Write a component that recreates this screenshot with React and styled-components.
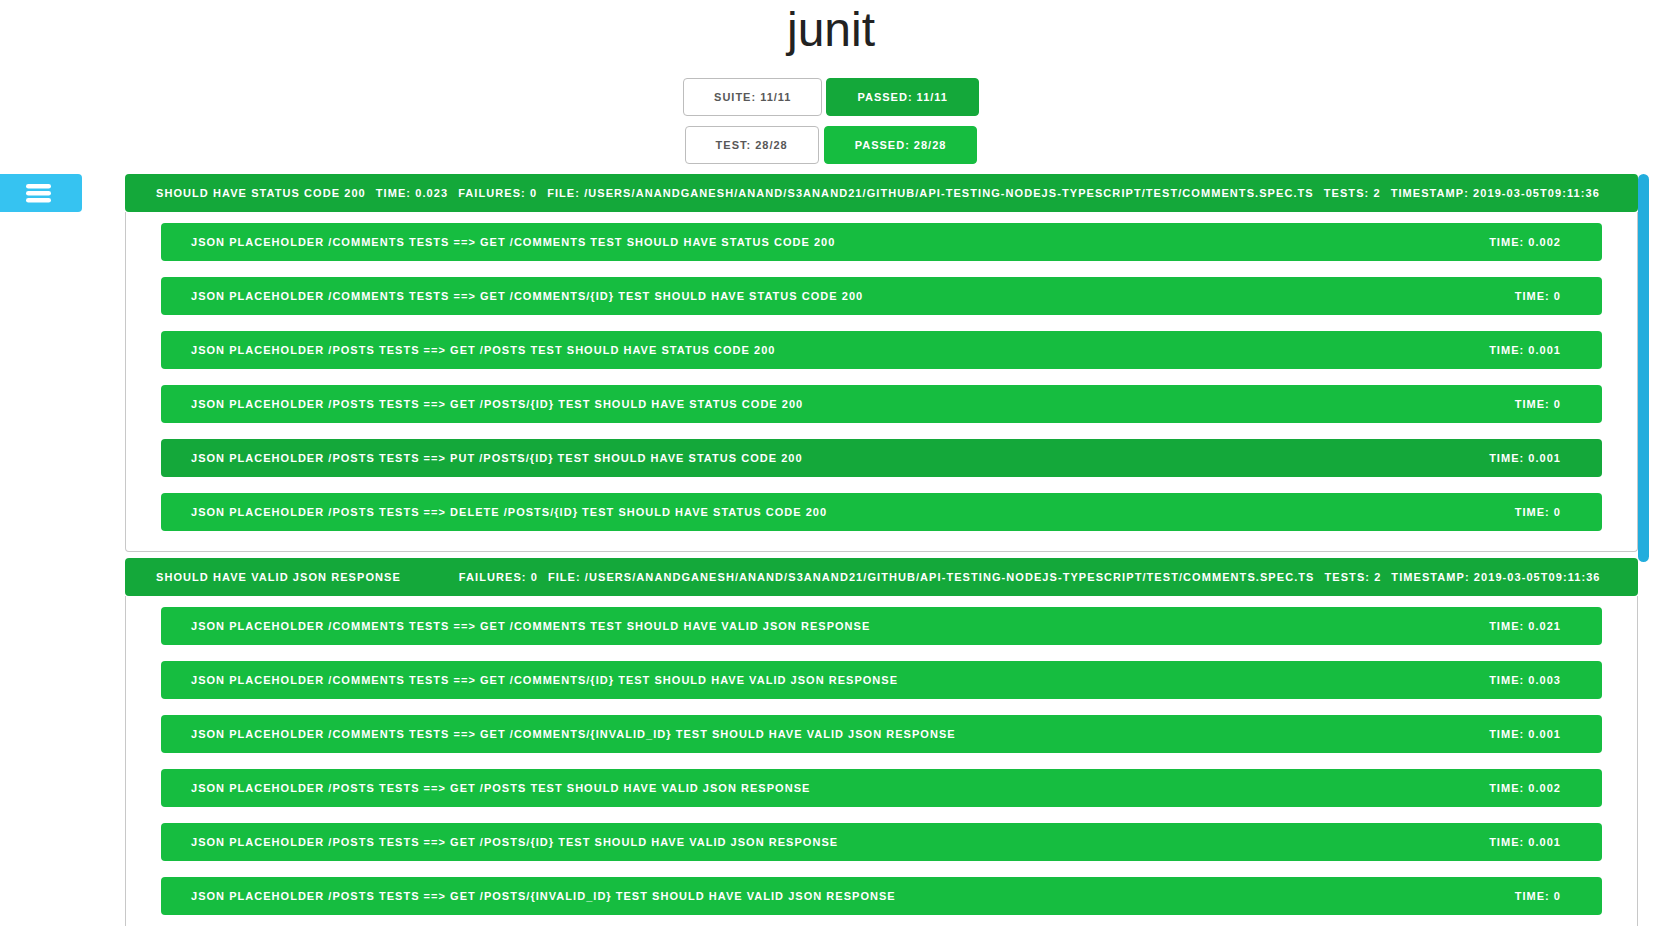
import React from "react";
import styled, { createGlobalStyle } from "styled-components";

const FILE =
  "/Users/anandganesh/anand/s3anand21/github/api-testing-nodejs-typescript/test/comments.spec.ts";
const POSTS_FILE =
  "/Users/anandganesh/anand/s3anand21/github/api-testing-nodejs-typescript/test/posts.spec.ts";
const STAMP = "2019-03-05T09:11:36";

const suites = [
  {
    name: "should have status code 200",
    time: "0.023",
    failures: 0,
    file: FILE,
    tests: 2,
    timestamp: STAMP,
    cases: [
      { name: "JSON Placeholder /comments tests ==> GET /comments test should have status code 200", time: "0.002" },
      { name: "JSON Placeholder /comments tests ==> GET /comments/{id} test should have status code 200", time: "0" },
      { name: "JSON Placeholder /posts tests ==> GET /posts test should have status code 200", time: "0.001" },
      { name: "JSON Placeholder /posts tests ==> GET /posts/{id} test should have status code 200", time: "0" },
      { name: "JSON Placeholder /posts tests ==> PUT /posts/{id} test should have status code 200", time: "0.001", active: true },
      { name: "JSON Placeholder /posts tests ==> DELETE /posts/{id} test should have status code 200", time: "0" },
    ],
  },
  {
    name: "should have valid json response",
    time: "",
    failures: 0,
    file: FILE,
    tests: 2,
    timestamp: STAMP,
    cases: [
      { name: "JSON Placeholder /comments tests ==> GET /comments test should have valid json response", time: "0.021" },
      { name: "JSON Placeholder /comments tests ==> GET /comments/{id} test should have valid json response", time: "0.003" },
      { name: "JSON Placeholder /comments tests ==> GET /comments/{invalid_id} test should have valid json response", time: "0.001" },
      { name: "JSON Placeholder /posts tests ==> GET /posts test should have valid json response", time: "0.002" },
      { name: "JSON Placeholder /posts tests ==> GET /posts/{id} test should have valid json response", time: "0.001" },
      { name: "JSON Placeholder /posts tests ==> GET /posts/{invalid_id} test should have valid json response", time: "0" },
    ],
  },
  // remaining suites, below the fold
  ...[2, 2, 2, 2, 2, 2, 2, 1, 1].map((count, k) => ({
    name: `posts suite ${k + 3}`,
    time: "0.004",
    failures: 0,
    file: POSTS_FILE,
    tests: count,
    timestamp: STAMP,
    cases: Array.from({ length: count }, (_, i) => ({
      name: `JSON Placeholder /posts tests ==> case ${i + 1}`,
      time: "0.001",
    })),
  })),
];

const VIEW = 926;
const contentHeight =
  suites.reduce((sum, s) => sum + 60 + 54 * s.cases.length, 0) + 38;
const thumbHeight = Math.round((VIEW * VIEW) / contentHeight);
const visibleSuites = suites.slice(0, 2);

const GlobalStyle = createGlobalStyle`
  html, body {
    margin: 0;
    overflow: hidden;
    background: #fff;
  }
  body {
    font-family: "Liberation Sans", Arial, sans-serif;
  }
`;

const Page = styled.div`
  padding-top: 2px;
`;

const Title = styled.h1`
  margin: 0 0 20px;
  font-size: 48px;
  line-height: 56px;
  font-weight: 400;
  color: #222;
  text-align: center;
`;

const Counters = styled.div`
  display: flex;
  flex-direction: column;
  align-items: center;
  gap: 10px;
`;

const CounterRow = styled.div`
  display: flex;
  gap: ${(p) => p.$gap}px;
`;

const Counter = styled.div`
  height: 38px;
  box-sizing: border-box;
  padding: 0 30px;
  display: flex;
  align-items: center;
  border-radius: 4px;
  border: 1px solid ${(p) => (p.$passed ? p.$bg : "#bdbdbd")};
  background: ${(p) => (p.$passed ? p.$bg : "#fff")};
  color: ${(p) => (p.$passed ? "#fff" : "#585858")};
  font-size: 11px;
  font-weight: 700;
  letter-spacing: 1px;
  white-space: nowrap;
`;

const Main = styled.div`
  display: flex;
  margin-top: 10px;
`;

const Sidebar = styled.div`
  width: 125px;
  flex-shrink: 0;
`;

const MenuButton = styled.button`
  width: 82px;
  height: 38px;
  padding: 0 5px 0 0;
  border: none;
  border-radius: 0 4px 4px 0;
  background: #36c3f1;
  display: flex;
  align-items: center;
  justify-content: center;
  cursor: pointer;
`;

const Report = styled.div`
  flex: 1;
  min-width: 0;
  height: calc(100vh - 174px);
  overflow: hidden;
  display: flex;
  flex-direction: column;
  gap: 6px;
`;

const ScrollTrack = styled.div`
  width: 11px;
  flex-shrink: 0;
  margin-right: 13px;
`;

const ScrollThumb = styled.div`
  width: 11px;
  background: #22addd;
  border-radius: 6px;
`;

const Suite = styled.section`
  flex-shrink: 0;
`;

const SuiteHeader = styled.div`
  height: 38px;
  box-sizing: border-box;
  padding: 0 31px;
  display: flex;
  align-items: center;
  gap: 10px;
  background: #14a83a;
  border-radius: 4px;
  color: #fff;
  font-size: 11px;
  font-weight: 700;
  letter-spacing: 1.07px;
  text-transform: uppercase;
  white-space: nowrap;
  overflow: hidden;
`;

const Meta = styled.span`
  flex-shrink: 0;
`;

const EmptyMeta = styled.span`
  width: 38px;
  flex-shrink: 0;
`;

const SuiteBody = styled.div`
  border: 1px solid #c8c8c8;
  border-top: none;
  border-radius: 0 0 4px 4px;
  padding: 11px 35px 20px;
  display: flex;
  flex-direction: column;
  gap: 16px;
`;

const TestRow = styled.div`
  height: 38px;
  box-sizing: border-box;
  padding: 0 41px 0 30px;
  display: flex;
  align-items: center;
  justify-content: space-between;
  background: ${(p) => (p.$active ? "#14a83a" : "#16bd40")};
  border-radius: 4px;
  color: #fff;
  font-size: 11px;
  font-weight: 700;
  letter-spacing: 1.03px;
  text-transform: uppercase;
  white-space: nowrap;
`;

const BarsIcon = () => (
  <svg width="25" height="19" viewBox="0 0 25 19" fill="#fff">
    <rect x="0" y="0" width="25" height="4.6" rx="2.3" />
    <rect x="0" y="7" width="25" height="4.6" rx="2.3" />
    <rect x="0" y="14" width="25" height="4.6" rx="2.3" />
  </svg>
);

export default function App() {
  return (
    <Page>
      <GlobalStyle />
      <Title>junit</Title>
      <Counters>
        <CounterRow $gap={4}>
          <Counter>SUITE: 11/11</Counter>
          <Counter $passed $bg="#14a83a">PASSED: 11/11</Counter>
        </CounterRow>
        <CounterRow $gap={5}>
          <Counter>TEST: 28/28</Counter>
          <Counter $passed $bg="#16bd40">PASSED: 28/28</Counter>
        </CounterRow>
      </Counters>
      <Main>
        <Sidebar>
          <MenuButton aria-label="menu">
            <BarsIcon />
          </MenuButton>
        </Sidebar>
        <Report>
          {visibleSuites.map((s, i) => (
            <Suite key={i}>
              <SuiteHeader>
                <Meta>{s.name}</Meta>
                {s.time ? <Meta>time: {s.time}</Meta> : <EmptyMeta />}
                <Meta>failures: {s.failures}</Meta>
                <Meta>file: {s.file}</Meta>
                <Meta>tests: {s.tests}</Meta>
                <Meta>timestamp: {s.timestamp}</Meta>
              </SuiteHeader>
              <SuiteBody>
                {s.cases.map((c, j) => (
                  <TestRow key={j} $active={c.active}>
                    <span>{c.name}</span>
                    <span>time: {c.time}</span>
                  </TestRow>
                ))}
              </SuiteBody>
            </Suite>
          ))}
        </Report>
        <ScrollTrack>
          <ScrollThumb style={{ height: thumbHeight }} />
        </ScrollTrack>
      </Main>
    </Page>
  );
}
